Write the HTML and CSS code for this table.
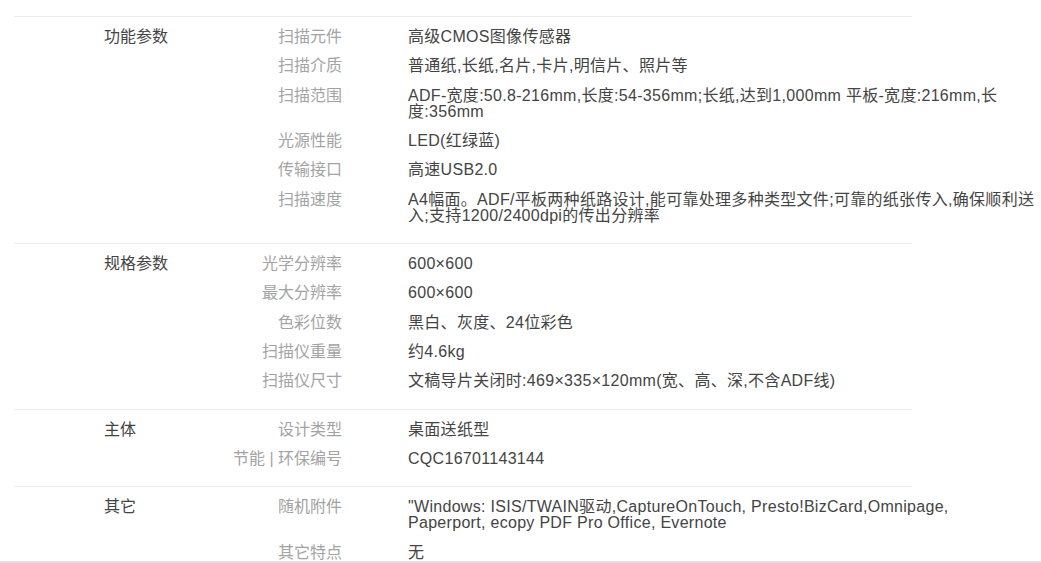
FILE: index.html
```html
<!DOCTYPE html>
<html lang="zh-CN">
<head>
    <meta charset="UTF-8">
    <meta name="viewport" content="width=device-width, initial-scale=1.0">
    <title>规格参数</title>
    <link rel="stylesheet" href="styles.css">
</head>
<body>
    <div class="page">
        <div class="specs">
            <div class="group">
                <div class="group-title">功能参数</div>
                <ul class="items">
                    <li><span class="key">扫描元件</span><span class="val">高级CMOS图像传感器</span></li>
                    <li><span class="key">扫描介质</span><span class="val">普通纸,长纸,名片,卡片,明信片、照片等</span></li>
                    <li><span class="key">扫描范围</span><span class="val">ADF-宽度:50.8-216mm,长度:54-356mm;长纸,达到1,000mm 平板-宽度:216mm,长度:356mm</span></li>
                    <li><span class="key">光源性能</span><span class="val">LED(红绿蓝)</span></li>
                    <li><span class="key">传输接口</span><span class="val">高速USB2.0</span></li>
                    <li><span class="key">扫描速度</span><span class="val">A4幅面。ADF/平板两种纸路设计,能可靠处理多种类型文件;可靠的纸张传入,确保顺利送入;支持1200/2400dpi的传出分辨率</span></li>
                </ul>
            </div>
            <div class="group">
                <div class="group-title">规格参数</div>
                <ul class="items">
                    <li><span class="key">光学分辨率</span><span class="val">600×600</span></li>
                    <li><span class="key">最大分辨率</span><span class="val">600×600</span></li>
                    <li><span class="key">色彩位数</span><span class="val">黑白、灰度、24位彩色</span></li>
                    <li><span class="key">扫描仪重量</span><span class="val">约4.6kg</span></li>
                    <li><span class="key">扫描仪尺寸</span><span class="val">文稿导片关闭时:469×335×120mm(宽、高、深,不含ADF线)</span></li>
                </ul>
            </div>
            <div class="group">
                <div class="group-title">主体</div>
                <ul class="items">
                    <li><span class="key">设计类型</span><span class="val">桌面送纸型</span></li>
                    <li><span class="key">节能 | 环保编号</span><span class="val">CQC16701143144</span></li>
                </ul>
            </div>
            <div class="group">
                <div class="group-title">其它</div>
                <ul class="items">
                    <li><span class="key">随机附件</span><span class="val">"Windows: ISIS/TWAIN驱动,CaptureOnTouch, Presto!BizCard,Omnipage,<br>Paperport, ecopy PDF Pro Office, Evernote</span></li>
                    <li><span class="key">其它特点</span><span class="val">无</span></li>
                </ul>
            </div>
        </div>
    </div>
</body>
</html>
```

FILE: styles.css
```css
html, body {
    margin: 0;
    padding: 0;
    background: #fff;
}
body {
    font-family: "Liberation Sans", Arial, "Noto Sans CJK SC", sans-serif;
    font-size: 16px;
    color: #333;
}
.page {
    height: 563px;
    box-sizing: border-box;
    border-bottom: 2px solid #e2e2e2;
    overflow: hidden;
}
.specs {
    width: 898px;
    margin-left: 14px;
    padding-top: 16px;
}
.group {
    display: flex;
    border-top: 1px solid #ebebeb;
    padding: 12px 0 6px 90px;
}
.group-title {
    width: 110px;
    flex-shrink: 0;
    line-height: 16px;
    color: #444;
}
.items {
    list-style: none;
    margin: 0;
    padding: 0;
}
.items li {
    display: flex;
    line-height: 16px;
    padding-bottom: 13.33px;
}
.key {
    width: 128px;
    flex-shrink: 0;
    text-align: right;
    color: #a3a3a3;
}
.val {
    width: 630px;
    margin-left: 66px;
    color: #444;
    letter-spacing: 0.3px;
}
```
